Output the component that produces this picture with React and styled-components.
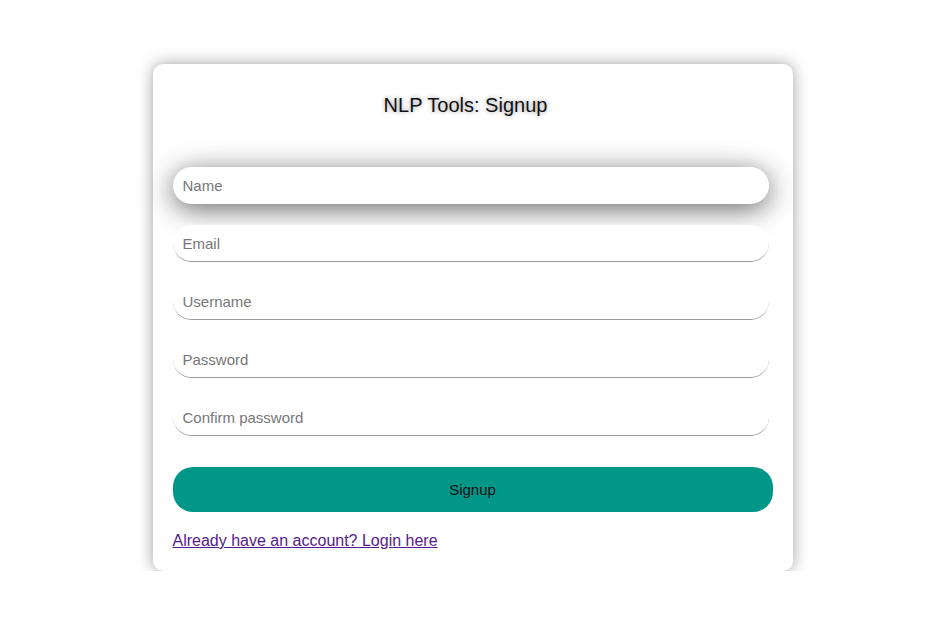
import React from 'react';
import styled, { createGlobalStyle } from 'styled-components';

const GlobalStyle = createGlobalStyle`
  body {
    margin: 0;
    background: #ffffff;
    font-family: "Liberation Sans", Arial, sans-serif;
  }
`;

const Page = styled.div`
  display: flex;
  justify-content: center;
  padding-top: 64px;
`;

const Card = styled.form`
  width: 600px;
  padding: 20px 20px 21px;
  background: #fff;
  border-radius: 10px;
  box-shadow: 0 0 16px rgba(0, 0, 0, 0.38);
  display: flex;
  flex-direction: column;
`;

const Title = styled.h2`
  margin: 10px 0 50px;
  padding-right: 14px;
  text-align: center;
  font-size: 20px;
  font-weight: normal;
  line-height: 23px;
  color: #111;
  text-shadow: 0 0 5px rgba(0, 0, 0, 0.4);
`;

const Field = styled.input`
  box-sizing: border-box;
  width: 596px;
  height: 37px;
  margin: 0 0 21px;
  padding: 0 10px;
  border: none;
  border-bottom: 1px solid #999;
  border-radius: 20px;
  font-family: inherit;
  font-size: 15px;
  color: #222;
  background: #fff;
  outline: none;
  box-shadow: ${p => (p.$raised ? '0 5px 28px rgba(0, 0, 0, 0.6)' : 'none')};
  border-bottom-color: ${p => (p.$raised ? 'transparent' : '#999')};

  &::placeholder {
    color: #777;
  }
`;

const Button = styled.button`
  margin-top: 10px;
  height: 45px;
  border: none;
  border-radius: 20px;
  background: #009688;
  color: #111;
  font-family: inherit;
  font-size: 15px;
  cursor: pointer;
`;

const LoginLink = styled.a`
  margin-top: 20px;
  align-self: flex-start;
  color: #551a8b;
  font-size: 16px;
  line-height: 18px;
  text-decoration: underline;
`;

const fields = [
  { name: 'name', type: 'text', placeholder: 'Name' },
  { name: 'email', type: 'email', placeholder: 'Email' },
  { name: 'username', type: 'text', placeholder: 'Username' },
  { name: 'password', type: 'password', placeholder: 'Password' },
  { name: 'confirm', type: 'password', placeholder: 'Confirm password' },
];

export default function App() {
  return (
    <>
      <GlobalStyle />
      <Page>
        <Card onSubmit={e => e.preventDefault()}>
          <Title>NLP Tools: Signup</Title>
          {fields.map((f, i) => (
            <Field key={f.name} $raised={i === 0} {...f} />
          ))}
          <Button type="submit">Signup</Button>
          <LoginLink href="#login">Already have an account? Login here</LoginLink>
        </Card>
      </Page>
    </>
  );
}
